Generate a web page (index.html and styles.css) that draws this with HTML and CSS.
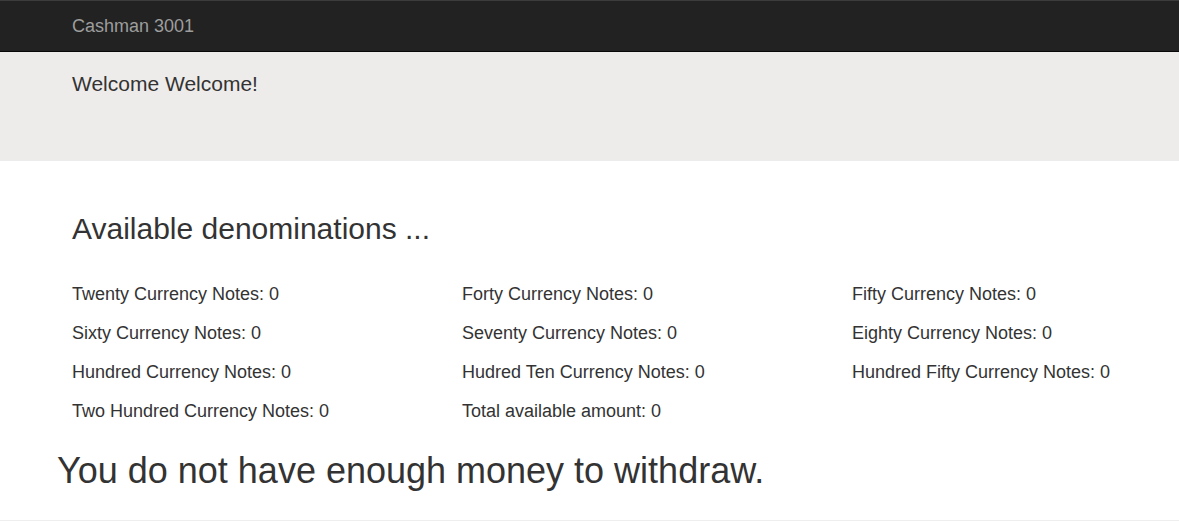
FILE: index.html
```html
<!DOCTYPE html>
<html>
<head>
<meta charset="utf-8">
<title>Cashman 3001</title>
<link rel="stylesheet" href="styles.css">
</head>
<body>
<nav class="navbar">
  <div class="container">
    <a class="brand" href="#">Cashman 3001</a>
  </div>
</nav>
<header class="jumbotron">
  <div class="container">
    <p class="lead">Welcome Welcome!</p>
  </div>
</header>
<main class="container main">
  <h2 class="title">Available denominations ...</h2>
  <div class="grid">
    <p class="item">Twenty Currency Notes: 0</p>
    <p class="item">Forty Currency Notes: 0</p>
    <p class="item">Fifty Currency Notes: 0</p>
    <p class="item">Sixty Currency Notes: 0</p>
    <p class="item">Seventy Currency Notes: 0</p>
    <p class="item">Eighty Currency Notes: 0</p>
    <p class="item">Hundred Currency Notes: 0</p>
    <p class="item">Hudred Ten Currency Notes: 0</p>
    <p class="item">Hundred Fifty Currency Notes: 0</p>
    <p class="item">Two Hundred Currency Notes: 0</p>
    <p class="item">Total available amount: 0</p>
  </div>
  <h1 class="notice">You do not have enough money to withdraw.</h1>
</main>
<hr class="rule">
</body>
</html>
```

FILE: styles.css
```css
html, body {
  margin: 0;
  padding: 0;
}
body {
  font-family: "Liberation Sans", Arial, sans-serif;
  color: #333;
  background: #fff;
  font-size: 16px;
  overflow: hidden;
}
.container {
  padding-left: 72px;
  padding-right: 0;
}
.navbar {
  background: #222;
  border-top: 1px solid #3c3c3c;
  border-bottom: 1px solid #080808;
  height: 50px;
}
.brand {
  display: block;
  font-size: 18px;
  line-height: 20px;
  padding: 15px 0;
  color: #9d9d9d;
  text-decoration: none;
}
.jumbotron {
  background: #eeeceb;
  height: 109px;
  padding-top: 17px;
  box-sizing: border-box;
}
.lead {
  margin: 0;
  font-size: 21px;
  line-height: 30px;
}
.main {
  padding-top: 50px;
}
.title {
  margin: 0;
  font-size: 30px;
  font-weight: 500;
  line-height: 36px;
}
.grid {
  display: grid;
  grid-template-columns: 390px 390px minmax(0, 1fr);
  row-gap: 19px;
  margin-top: 37px;
}
.item {
  margin: 0;
  font-size: 18px;
  line-height: 20px;
  white-space: nowrap;
}
.notice {
  margin: 30px 0 0 -15px;
  font-size: 36px;
  font-weight: 500;
  line-height: 40px;
}
.rule {
  margin: 29px 0 0;
  border: 0;
  border-top: 1px solid #eee;
}
```
